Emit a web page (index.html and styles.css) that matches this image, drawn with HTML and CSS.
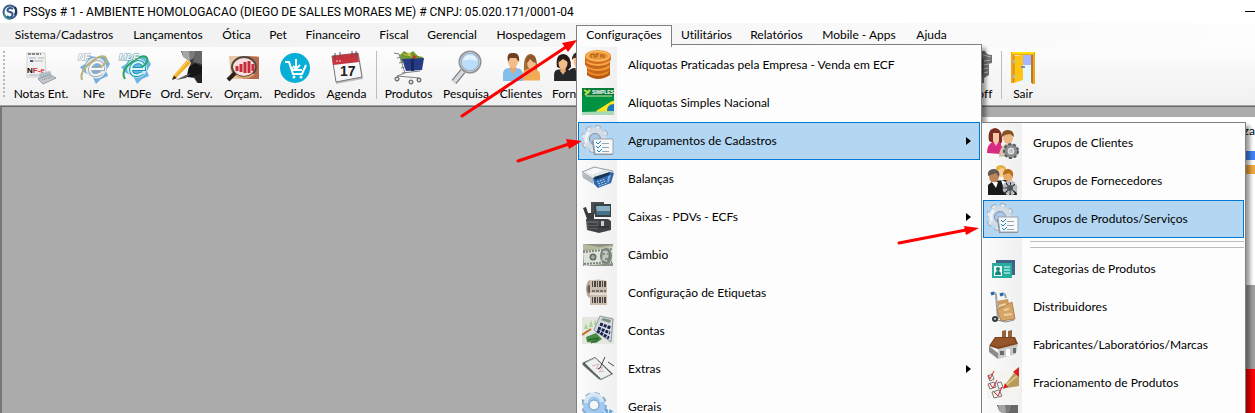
FILE: index.html
```
<!DOCTYPE html>
<html lang="pt-BR">
<head>
    <meta charset="UTF-8">
    <meta name="viewport" content="width=device-width, initial-scale=1.0">
    <title>PSSys</title>
    <link rel="stylesheet" href="styles.css">
</head>
<body>
    <!-- Símbolos usados mais de uma vez -->
    <svg class="symbols" aria-hidden="true">
        <symbol id="gear-list" viewBox="0 0 32 32">
            <circle cx="13" cy="14" r="11.5" fill="none" stroke="#9aa8b8" stroke-width="5" stroke-dasharray="5 4.03"/>
            <circle cx="13" cy="14" r="11.5" fill="none" stroke="#e4eaf0" stroke-width="3" stroke-dasharray="4 5.03" stroke-dashoffset="-0.5"/>
            <circle cx="13" cy="14" r="8.5" fill="none" stroke="#d3dce5" stroke-width="5"/>
            <path d="M5 18a9 9 0 0 1 2-11" fill="none" stroke="#eef3f7" stroke-width="3"/>
            <circle cx="13" cy="14" r="5.5" fill="#a9c9e8" stroke="#8093a8"/>
            <path d="M10 16h19l2 1v13H12z" fill="#7f8c99"/>
            <path d="M11 14h20v15H13z" fill="#f6f8fa" stroke="#98a3ae"/>
            <path d="M14 17l2 2 3-3M14 21l2 2 3-3M15 25l2 2 3-3" fill="none" stroke="#1687c4"/>
            <path d="M20 18.500h7M20 22.500h7M20 26.500h7" stroke="#9aa6b2"/>
        </symbol>
        <symbol id="pencil-hand" viewBox="0 0 32 32">
            <path d="M10 0h21v33h-4l-4-6-7-1 1-7 3-7-3-4-5-3z" fill="#3f3f3f"/>
            <path d="M11 0h13l-1 6-5 4-6-4z" fill="#a5a5a5"/>
            <path d="M18 0h7l-2 7-4 2z" fill="#7b7b7b"/>
            <path d="M25 0h6v13l-9-2z" fill="#666"/>
            <path d="M18 16l6-4 7 3v8l-8 3-7 0z" fill="#161616"/>
            <path d="M20 22l-5 5-10 2 10-5z" fill="#555"/>
            <path d="M24 26l7-4v10l-3 1z" fill="#222"/>
            <path d="M2 25L16 9l4 3L6 26l-5 3z" fill="#f2ae26"/>
            <path d="M4 24L17 10" stroke="#ffdc70"/>
            <path d="M1 29l2-4 3 2z" fill="#2c2015"/>
        </symbol>
        <symbol id="person" viewBox="0 0 20 28">
            <path d="M0 28v-7q0-6 6-6h7q6 0 7 6v7z" fill="currentColor"/>
            <path d="M7 13h6v4l-3 4-3-4z" fill="#e5a978"/>
            <ellipse cx="10" cy="8" rx="5" ry="7" fill="#f2bd8b"/>
        </symbol>
    </svg>

    <header class="titlebar">
        <svg class="app-logo" viewBox="0 0 16 16">
            <circle cx="8" cy="8" r="6.500" fill="#f5fafb" stroke="#3b5f8d" stroke-width="2"/>
            <path d="M2 10a6.500 6.500 0 0 0 6 5" fill="none" stroke="#3d9c9c" stroke-width="2"/>
            <path d="M11 5q-3-2-5 0t2 3 2 4-5 0" fill="none" stroke="#32558a" stroke-width="2"/>
            <path d="M13 3q2 4 0 8" fill="none" stroke="#20344f" stroke-width="2"/>
        </svg>
        <span class="title">PSSys # 1 - AMBIENTE HOMOLOGACAO (DIEGO DE SALLES MORAES ME) # CNPJ: 05.020.171/0001-04</span>
        <button class="minimize" aria-label="Minimizar"></button>
    </header>

    <!-- Menu principal -->
    <nav class="menubar">
        <button>Sistema/Cadastros</button>
        <button>Lançamentos</button>
        <button>Ótica</button>
        <button>Pet</button>
        <button>Financeiro</button>
        <button>Fiscal</button>
        <button>Gerencial</button>
        <button>Hospedagem</button>
        <div class="menu-open">
            <button class="active">Configurações</button>
            <div class="dropdown main-menu">
                <button class="item">
                    <svg viewBox="0 0 32 32">
                        <path d="M5 21v5q11 8 23 0v-5z" fill="#b85713"/>
                        <ellipse cx="16" cy="22" rx="11" ry="5" fill="#e88b29"/>
                        <path d="M5 16v5q11 8 23 0v-5z" fill="#c9651b"/>
                        <ellipse cx="16" cy="17" rx="12" ry="5" fill="#f09a38"/>
                        <path d="M3 11v5q12 8 25 0v-5z" fill="#c9651b"/>
                        <ellipse cx="16" cy="12" rx="12" ry="5" fill="#f5a545"/>
                        <path d="M3 7v4q12 8 26 0V7z" fill="#d06c1c"/>
                        <ellipse cx="16" cy="7" rx="13" ry="6" fill="#ee9a3a"/>
                        <ellipse cx="16" cy="7" rx="11" ry="4.500" fill="none" stroke="#ffc36e"/>
                        <path d="M9 9V5h3v4M14 9V5h3M14 7h2M19 9V5l3 4V5" fill="none" stroke="#a65819"/>
                    </svg>
                    <span>Alíquotas Praticadas pela Empresa - Venda em ECF</span>
                </button>
                <button class="item">
                    <svg viewBox="0 0 32 32">
                        <path d="M0 1h32v27H0z" fill="#009243"/>
                        <path d="M0 1h32v8H0z" fill="#087b3b"/>
                        <path d="M14 24L30 14h2v11H15z" fill="#f9e51b"/>
                        <path d="M25 24q0-7 7-7v8z" fill="#1979b8"/>
                        <path d="M0 25l32-1v4H0z" fill="#a7d9b7"/>
                        <path d="M2 3l5 3M8 3L3 8" stroke="#b7e14a" stroke-width="2"/>
                        <text x="10" y="7" class="simples-text">SIMPLES</text>
                        <path d="M4 9h26" stroke="#d9e6a0"/>
                    </svg>
                    <span>Alíquotas Simples Nacional</span>
                </button>
                <button class="item selected">
                    <svg><use href="#gear-list"/></svg>
                    <span>Agrupamentos de Cadastros</span>
                    <i class="arrow"></i>
                </button>
                <button class="item">
                    <svg viewBox="0 0 32 32">
                        <path d="M0 9L12 4l19 4-2 4-18 4z" fill="#e2e5e7" stroke="#9aa1a7"/>
                        <path d="M3 9l10-4 8 2-10 5z" fill="#f7f8f8"/>
                        <path d="M0 10l11 6v5L1 15z" fill="#b4b9bd"/>
                        <path d="M11 15l17-6 4 1-3 10-13 5-4-4z" fill="#2f67ad"/>
                        <path d="M12 14l16-5-1 3-14 5z" fill="#173553"/>
                        <path d="M15 19l8-3M16 21l8-3M17 23l8-3" stroke="#c2dcf3" stroke-dasharray="2 1"/>
                        <path d="M26 13l3-1-2 7-2 1z" fill="#7ea9d8"/>
                    </svg>
                    <span>Balanças</span>
                </button>
                <button class="item">
                    <svg viewBox="0 0 32 32">
                        <path d="M9 1h13v12H9z" fill="#4b4e50"/>
                        <path d="M12 3h17v13H13z" fill="#3a3f42"/>
                        <path d="M14 5h14v9H15z" fill="#86afc2"/>
                        <path d="M14 10h14v4H15z" fill="#44708a"/>
                        <path d="M1 7l3-1 2 6h6v6H5z" fill="#3a3d3f"/>
                        <path d="M4 18h22l3 2v9l-12 3-12-3z" fill="#404345"/>
                        <path d="M5 20h11v8H5z" fill="#5a5e61"/>
                        <path d="M19 20h3v5h-3z" fill="#c5cdd1"/>
                        <path d="M6 23h9M6 26h21" stroke="#222425"/>
                    </svg>
                    <span>Caixas - PDVs - ECFs</span>
                    <i class="arrow"></i>
                </button>
                <button class="item">
                    <svg viewBox="0 0 32 32">
                        <path d="M1 5h30v22H1z" fill="#8a9185"/>
                        <path d="M1 5l16 3 14-2v3L1 11z" fill="#b9ba9c"/>
                        <path d="M1 12l30-4v16L2 27z" fill="#dfe3da"/>
                        <path d="M1 13l29-3M2 25l28-2" stroke="#7b8579" stroke-width="2" stroke-dasharray="2 1"/>
                        <circle cx="11" cy="18" r="3.500" fill="#626b62"/>
                        <circle cx="11" cy="18" r="2" fill="#a3ac9f"/>
                        <ellipse cx="24" cy="17" rx="6" ry="8" fill="#7a8379"/>
                        <path d="M21 12q5-2 6 3l-2 8-5-2z" fill="#bec5bc"/>
                        <path d="M21 15h2M25 15h2M23 20h3" stroke="#515b52"/>
                    </svg>
                    <span>Câmbio</span>
                </button>
                <button class="item">
                    <svg viewBox="0 0 32 32">
                        <ellipse cx="8" cy="12" rx="4" ry="9" fill="#bba89a"/>
                        <ellipse cx="7" cy="12" rx="1.500" ry="4" fill="#695c54"/>
                        <path d="M8 4q8-3 17 0v24H8z" fill="#cbbdb0"/>
                        <path d="M10 7h14M10 23h14" stroke="#4d4744" stroke-width="6" stroke-dasharray="1 1 2 1"/>
                        <path d="M10 14h14" stroke="#77706a" stroke-width="2" stroke-dasharray="3 1"/>
                        <path d="M8 17h17" stroke="#fff8ef"/>
                    </svg>
                    <span>Configuração de Etiquetas</span>
                </button>
                <button class="item">
                    <svg viewBox="0 0 32 32">
                        <path d="M0 2h32v27H0z" fill="#e4e6e0"/>
                        <path d="M2 14l2-6 2 6zM7 12l2-7 2 7zM12 10l1-6 2 6z" fill="#a6d58f"/>
                        <path d="M0 20l9-6" stroke="#bf7024" stroke-width="2"/>
                        <path d="M4 22l10-4 6 6-6 4-9-1z" fill="#458c43"/>
                        <path d="M6 25l10-2M9 28l8-4" stroke="#28522c"/>
                        <path d="M18 1l13 3-2 23-17-12z" fill="#d7dbe1" stroke="#8f969e"/>
                        <path d="M21 3l8 2-1 3-9-3z" fill="#779080"/>
                        <path d="M18 9l11 4M16 13l12 5M15 16l12 7" stroke="#18224f" stroke-width="3" stroke-dasharray="3 1"/>
                    </svg>
                    <span>Contas</span>
                </button>
                <button class="item">
                    <svg viewBox="0 0 32 32">
                        <path d="M0 10L13 4l18 17-12 6z" fill="#4b5455"/>
                        <path d="M3 10l10-5 16 16-10 5z" fill="#eef1f0" stroke="#b6bdbc"/>
                        <path d="M1 11l17 15" stroke="#60696a" stroke-width="2"/>
                        <path d="M10 13l7-2-3 5 7-2-4 5 5-1" fill="none" stroke="#dfb5b5"/>
                        <path d="M23 4l-5 11-2 1M26 9l6 4" fill="none" stroke="#3e4849"/>
                    </svg>
                    <span>Extras</span>
                    <i class="arrow"></i>
                </button>
                <button class="item">
                    <svg viewBox="0 0 32 32">
                        <circle cx="12" cy="14" r="11" fill="none" stroke="#86a9cb" stroke-width="4" stroke-dasharray="5 3.640"/>
                        <circle cx="12" cy="14" r="8" fill="none" stroke="#a1c9ef" stroke-width="6"/>
                        <path d="M4 12a8 8 0 0 1 16-1" fill="none" stroke="#d6e5ef" stroke-width="4"/>
                        <circle cx="12" cy="14" r="5" fill="none" stroke="#6296c4"/>
                        <circle cx="26" cy="25" r="5" fill="none" stroke="#6ba9db" stroke-width="4" stroke-dasharray="3 1"/>
                    </svg>
                    <span>Gerais</span>
                </button>
            </div>

            <!-- Submenu de Agrupamentos de Cadastros -->
            <div class="dropdown sub-menu">
                <button class="item">
                    <svg viewBox="0 0 32 32">
                        <path d="M2 14Q0 2 8 1q8 1 7 14l-3 4z" fill="#7c2e20"/>
                        <path d="M0 26q0-9 6-11h7l4 10-4 2z" fill="#d92b82"/>
                        <path d="M6 14l3 5 3-5V6H6z" fill="#f5c7a8"/>
                        <path d="M12 30q0-9 6-13h7q5 1 6 11z" fill="#d5c2a8"/>
                        <ellipse cx="21" cy="11" rx="5" ry="6" fill="#efb784"/>
                        <path d="M15 10q-1-7 6-7 6 0 6 7l-4-3-5 1z" fill="#865324"/>
                        <circle cx="24" cy="24" r="7" fill="#8b8e91" stroke="#54585b" stroke-width="2" stroke-dasharray="3 2"/>
                        <circle cx="24" cy="24" r="3" fill="#bfc2c4" stroke="#eee"/>
                    </svg>
                    <span>Grupos de Clientes</span>
                </button>
                <button class="item">
                    <svg viewBox="0 0 32 32">
                        <ellipse cx="14" cy="6" rx="5" ry="6" fill="#f6cf9a"/>
                        <path d="M9 6q-1-6 5-6 6 1 5 6l-4-3z" fill="#e5b343"/>
                        <ellipse cx="21" cy="11" rx="5" ry="6" fill="#e8aa68"/>
                        <path d="M16 10q0-7 6-6 5 1 4 8l-4-4z" fill="#b66d18"/>
                        <path d="M1 30V20l5-4 12-1 10 4 2 11z" fill="#17191b"/>
                        <ellipse cx="7" cy="11" rx="5" ry="7" fill="#bd8558"/>
                        <path d="M1 11q-1-7 6-7 7 1 5 8l-3-4z" fill="#625b53"/>
                        <path d="M5 17l4 6 2-6zM14 15l3 9 2-7z" fill="#fff"/>
                        <circle cx="23" cy="23" r="5" fill="none" stroke="#b7bcc0" stroke-width="5" stroke-dasharray="3 1"/>
                        <circle cx="23" cy="23" r="3" fill="#505559"/>
                    </svg>
                    <span>Grupos de Fornecedores</span>
                </button>
                <button class="item selected">
                    <svg><use href="#gear-list"/></svg>
                    <span>Grupos de Produtos/Serviços</span>
                </button>
                <div class="separator"></div>
                <button class="item">
                    <svg viewBox="0 0 32 32">
                        <path d="M9 7h19v15H9z" fill="#41628b"/>
                        <path d="M5 10h20v15H5z" fill="#27ad9d"/>
                        <path d="M7 13h8v10H7z" fill="#f4fbfa"/>
                        <circle cx="11" cy="16" r="2" fill="#168676"/>
                        <path d="M8 22q0-4 3-4t3 4z" fill="#168676"/>
                        <path d="M17 14h6M17 17h6M17 20h6" stroke="#eafffb"/>
                    </svg>
                    <span>Categorias de Produtos</span>
                </button>
                <button class="item">
                    <svg viewBox="0 0 32 32">
                        <path d="M4 3q4-3 5 1l2 24M13 4q5-4 6 3" fill="none" stroke="#9ba3aa" stroke-width="2"/>
                        <path d="M4 3l3-1M13 4l3-1" stroke="#2367b1" stroke-width="3"/>
                        <path d="M10 10l11-2 2 9-11 2z" fill="#c89a60"/>
                        <path d="M10 19l15-8 3 17-14 2z" fill="#d5a568" stroke="#b08550"/>
                        <path d="M12 15l7-2M17 19l5-1M17 24l8-1" stroke="#f1d0a0" stroke-width="2"/>
                        <path d="M6 28l13 3 8-2" fill="none" stroke="#858c91"/>
                        <circle cx="8" cy="28" r="3" fill="#383b3e"/>
                        <circle cx="8" cy="28" r="1" fill="#ddd"/>
                    </svg>
                    <span>Distribuidores</span>
                </button>
                <button class="item">
                    <svg viewBox="0 0 32 32">
                        <path d="M15 2l4-1v11h-4zM21 2l4-1v13h-4z" fill="#986238"/>
                        <path d="M2 17l9 7v6L2 23z" fill="#8b8b89"/>
                        <path d="M11 19l20-4-2 10-18 5z" fill="#cacac7"/>
                        <path d="M2 17L8 8h20l3 7-20 5z" fill="#7e431c"/>
                        <path d="M4 16l5-7h17l3 5-18 4z" fill="#97552a"/>
                        <path d="M13 22h4v4h-4zM26 19h3v5h-3z" fill="#656b6f"/>
                        <path d="M19 20h4v7h-4z" fill="#fff"/>
                    </svg>
                    <span>Fabricantes/Laboratórios/Marcas</span>
                </button>
                <button class="item">
                    <svg viewBox="0 0 32 32">
                        <path d="M0 3h32v28H0z" fill="#f4f3f0"/>
                        <path d="M1 9l4-2 2 5-4 2zM1 17l6-2 2 5-6 2zM5 25l7-2 3 6-8 2zM10 16l4-1 2 5-4 2z" fill="none" stroke="#757575"/>
                        <path d="M1 8l2 4L7 4M3 17l3 4 4-8M7 25l4 4 4-9" fill="none" stroke="#d2262a"/>
                        <path d="M17 19L27 6l5 3v10l-13 2z" fill="#b89a5a"/>
                        <path d="M18 19L30 9" stroke="#dcc48a" stroke-width="2"/>
                        <path d="M26 5l6-5v10z" fill="#d72324"/>
                        <path d="M18 16l3 4-5 2z" fill="#d81e22"/>
                    </svg>
                    <span>Fracionamento de Produtos</span>
                </button>
                <button class="item" aria-label="Funcionários">
                    <svg viewBox="0 0 32 32"><use href="#pencil-hand"/></svg>
                </button>
            </div>
        </div>
        <button>Utilitários</button>
        <button>Relatórios</button>
        <button>Mobile - Apps</button>
        <button>Ajuda</button>
    </nav>

    <!-- Barra de ferramentas -->
    <div class="toolbar">
        <button>
            <svg viewBox="0 0 32 32">
                <path d="M2 2h18l1 24H2z" fill="#f2f2f1" stroke="#d2d2d2"/>
                <path d="M3 3h13" stroke="#292929" stroke-dasharray="3 1"/>
                <path d="M4 7h7M13 7h6M5 10h13M4 24h12" stroke="#aab1b8"/>
                <path d="M5 10h3" stroke="#435d8a" stroke-width="2"/>
                <text x="2" y="22" class="nf-text">N<tspan class="nf-red">F-e</tspan></text>
                <path d="M14 23l11-3 2 5-13 4z" fill="#a9bcc8" stroke="#cbd3d8"/>
                <path d="M13 28l12-4 6 3-13 6z" fill="#c7cbd0" stroke="#959ba3"/>
                <path d="M17 29l10-3" stroke="#727b86" stroke-dasharray="1 1"/>
            </svg>
            Notas Ent.
        </button>
        <button>
            <svg viewBox="0 0 32 32">
                <path d="M12 5l7 1 8-1 5 8-4 7 2 5-7 3-5 5-4-8-7-3-5-6 5-3z" fill="#79addc"/>
                <circle cx="18" cy="17" r="8" fill="none" stroke="#e8eef3" stroke-width="5"/>
                <path d="M12 18h13q0-7-6-7-6 1-7 7 0 7 7 6l5-2" fill="none" stroke="#a3acb1" stroke-width="4"/>
                <path d="M12 18h13q0-7-6-7-6 1-7 7 0 7 7 6l5-2" fill="none" stroke="#f5f7f8" stroke-width="2"/>
                <path d="M4 29Q1 21 13 11 25 2 28 7q2 4-5 9" fill="none" stroke="#b8b276" stroke-width="2"/>
                <text x="0" y="9" class="nfe-text">NF</text>
            </svg>
            NFe
        </button>
        <button>
            <svg viewBox="0 0 32 32">
                <path d="M12 5l7 1 8-1 5 8-4 7 2 5-7 3-5 5-4-8-7-3-5-6 5-3z" fill="#6bb5e6"/>
                <circle cx="18" cy="17" r="8" fill="none" stroke="#d5e9ee" stroke-width="4"/>
                <path d="M12 18h13q0-7-6-7-6 1-7 7 0 7 7 6l5-2" fill="none" stroke="#1497b8" stroke-width="4"/>
                <path d="M12 18h13q0-7-6-7-6 1-7 7 0 7 7 6l5-2" fill="none" stroke="#ddf4f7" stroke-width="2"/>
                <path d="M6 28Q1 20 13 11 25 2 28 7q2 4-5 9" fill="none" stroke="#28a760" stroke-width="2"/>
                <text x="0" y="9" class="nfe-text mdf">MDF</text>
            </svg>
            MDFe
        </button>
        <button><svg><use href="#pencil-hand"/></svg>Ord. Serv.</button>
        <button>
            <svg viewBox="0 0 32 32">
                <path d="M2 5h29l1 23H4z" fill="#e5c9a8"/>
                <path d="M20 5l12 1v22H16z" fill="#b76b4d"/>
                <ellipse cx="17" cy="16" rx="12" ry="10" fill="#f9dfdc" stroke="#504740" stroke-width="2"/>
                <path d="M10 15v5M14 13v8M18 11v11M22 10v12M26 13v7" stroke="#c72b39" stroke-width="3"/>
                <path d="M9 24q9 6 18-1" fill="none" stroke="#daa36b" stroke-width="2"/>
                <path d="M1 29l7-7" stroke="#2b211a" stroke-width="4"/>
            </svg>
            Orçam.
        </button>
        <button>
            <svg viewBox="0 0 32 32">
                <circle cx="16" cy="17" r="15" fill="#07aed5"/>
                <path d="M6 11h4l4 12h9l4-9" fill="none" stroke="#fff" stroke-width="2"/>
                <path d="M17 8v10M14 15l3 3 4-4M12 16l2 3h9" fill="none" stroke="#fff" stroke-width="2"/>
                <circle cx="15" cy="26" r="1.500" fill="#fff"/><circle cx="22" cy="26" r="1.500" fill="#fff"/>
            </svg>
            Pedidos
        </button>
        <button>
            <svg viewBox="0 0 32 32">
                <path d="M3 7l25-3 4 24-27 5z" fill="#bfc0c2"/>
                <path d="M1 5l26-3 4 24-26 5z" fill="#f7f7f7" stroke="#777"/>
                <path d="M1 5l26-3 1 9-26 3z" fill="#c6353d"/>
                <path d="M4 2v6M9 1v6M21 0v6M25 0v6" stroke="#555"/>
                <path d="M5 10h6" stroke="#ffd4d4" stroke-dasharray="2 1"/>
                <text x="9" y="25" class="day">17</text>
            </svg>
            Agenda
        </button>
        <i class="divider"></i>
        <button>
            <svg viewBox="0 0 32 32">
                <path d="M7 4l4-4 5 3 4-3 5 5 5 1-1 6H8z" fill="#72992d"/>
                <path d="M9 2l4 3 3-4 3 5z" fill="#dcc44b"/>
                <path d="M20 4l4 2-5 3z" fill="#bd3c25"/>
                <path d="M9 8l22-1-2 12-16 1z" fill="#263b84"/>
                <path d="M18 8h3v12h-3z" fill="#18275f"/>
                <path d="M1 2l5 1 6 19-8 3 22 2M4 7l5-1M6 12l5-1M8 17l4-1M9 22l18-2" fill="none" stroke="#7c8185"/>
                <circle cx="4" cy="28" r="2" fill="#ddd" stroke="#44484a"/><circle cx="18" cy="31" r="2" fill="#ddd" stroke="#44484a"/><circle cx="26" cy="29" r="2" fill="#ddd" stroke="#44484a"/>
            </svg>
            Produtos
        </button>
        <button>
            <svg viewBox="0 0 32 32">
                <path d="M4 31l9-11" stroke="#6e7379" stroke-width="6"/>
                <path d="M4 31l9-11" stroke="#d5d7da" stroke-width="4"/>
                <circle cx="20" cy="11" r="10" fill="#b9ddfb" stroke="#8d9298" stroke-width="3"/>
                <circle cx="20" cy="11" r="9.500" fill="none" stroke="#d0d3d5"/>
                <path d="M13 10q7-3 14 0Q26 4 20 4t-7 6z" fill="#e5f3ff"/>
            </svg>
            Pesquisa
        </button>
        <button>
            <svg class="people" viewBox="0 0 36 32">
                <path d="M21 20Q20 3 28 3q7 1 6 17l-4 4z" fill="#a46c35"/>
                <use href="#person" x="20" y="5" width="17" height="25" class="orange"/>
                <path d="M23 12q0-8 5-8t5 8q-4-1-6-4-1 3-4 4z" fill="#8e572b"/>
                <use href="#person" x="0" y="2" width="20" height="28" class="blue"/>
                <path d="M5 11Q3 1 10 2q7-1 6 9l-3-4H7z" fill="#6e4021"/>
            </svg>
            Clientes
        </button>
        <button>
            <svg class="people" viewBox="0 0 36 32">
                <path d="M3 16Q1 3 10 3q7 1 7 13l-4 4z" fill="#281c19"/>
                <use href="#person" x="0" y="5" width="18" height="25" class="dark"/>
                <path d="M5 11q0-8 5-7 5 1 4 7l-5-3z" fill="#241a18"/>
                <use href="#person" x="13" y="2" width="23" height="28" class="dark"/>
                <path d="M18 9q0-8 7-8t6 9l-4-4-7 1z" fill="#3b2822"/>
                <path d="M22 18l2 6 3-6z" fill="#fff"/>
            </svg>
            Fornec.
        </button>
        <button class="logoff">
            <svg viewBox="0 0 32 32">
                <path d="M18 0h7q1 4 7 4v8q-3 0-3 2v10l-5 3v5h-8z" fill="#717171"/>
                <path d="M23 4l8 2M24 10l6-1M23 14l6-1M23 18l5-1M23 22l5-1" stroke="#bdbdbd"/>
                <path d="M22 8v16" stroke="#454545" stroke-width="3"/>
            </svg>
            Logoff
        </button>
        <i class="divider"></i>
        <button>
            <svg viewBox="0 0 32 32">
                <path d="M4 1h24v32h-3V4H7v28H4z" fill="#efa619"/>
                <path d="M5 2h22" stroke="#ffe000" stroke-width="2"/>
                <path d="M8 4h17v27H8z" fill="#e6f6ff"/>
                <path d="M15 4h10v10H15z" fill="#a5b7ff"/>
                <path d="M25 4v28" stroke="#b97830" stroke-width="2"/>
                <path d="M7 5l9-1v25l-9 3z" fill="#ffc414"/>
                <path d="M7 4v27" stroke="#c98425"/>
                <path d="M14 16h4" stroke="#7f8fb1" stroke-width="2"/>
                <path d="M7 9v3M7 24v3" stroke="#94c2db" stroke-width="2"/>
            </svg>
            Sair
        </button>
    </div>

    <main class="desktop">
        <section class="panel">
            <div class="chart">
                <span>za</span>
                <div class="bar blue-bar"></div>
                <div class="bar orange-bar"></div>
            </div>
            <div class="panel-gap"></div>
            <div class="alert"></div>
        </section>
    </main>

    <!-- Setas de indicação -->
    <svg class="pointers" aria-hidden="true">
        <g stroke="#f00" stroke-width="3" stroke-linecap="round">
            <path d="M462 116L566 47"/>
            <path d="M518 161L569 144"/>
            <path d="M899 243L966 230"/>
        </g>
        <g fill="#f00">
            <path d="M577 40l-15 3 6 9z"/>
            <path d="M582 141l-16-2 3 10z"/>
            <path d="M979 228l-15-2 2 9z"/>
        </g>
    </svg>
</body>
</html>
```
FILE: styles.css
```
* {
    box-sizing: border-box;
}

body {
    margin: 0;
    height: 100vh;
    display: flex;
    flex-direction: column;
    overflow: hidden;
    font-family: Lato, "Open Sans", sans-serif;
    font-size: 12px;
    line-height: 16px;
    font-variant-ligatures: none;
    color: #000;
    background: #ababab;
}

button {
    border: none;
    padding: 0;
    background: none;
    font: inherit;
    font-variant-ligatures: none;
    color: inherit;
    white-space: nowrap;
}

.symbols {
    position: absolute;
    width: 0;
    height: 0;
}

.titlebar {
    display: flex;
    flex: none;
    align-items: center;
    height: 23px;
    padding-left: 2px;
    background: #fff;
}

.app-logo {
    width: 16px;
    height: 16px;
    margin-right: 5px;
}

.title {
    font-family: Roboto, "Open Sans", sans-serif;
    white-space: nowrap;
}

.minimize {
    width: 10px;
    height: 1px;
    margin-left: auto;
    background: #000;
}

/* menu */
.menubar {
    display: grid;
    flex: none;
    grid-template-columns: 118px 90px 47px 36px 74px 48px 68px 90px 96px 69px 71px 94px 51px;
    height: 24px;
    padding-left: 5px;
    background: linear-gradient(to right, #f0f0f0, #fdfdfd);
}

.menu-open {
    position: relative;
    display: grid;
}

.active {
    position: relative;
    z-index: 3;
    margin-top: 2px;
    padding-bottom: 3px;
    border: 1px solid #808080;
    border-bottom: none;
    background: #fcfcfc;
}

.dropdown {
    position: absolute;
    border: 1px solid #808080;
    padding: 1px;
    background: linear-gradient(to right, #fbfbfb, #f0f0f0 40px, #fdfdfd 40px);
    box-shadow: 4px 4px 4px rgba(0, 0, 0, 0.4);
}

.main-menu {
    z-index: 2;
    top: 21px;
    left: 0;
    width: 406px;
}

.sub-menu {
    z-index: 4;
    top: 99px;
    left: 405px;
    width: 265px;
}

.item {
    display: flex;
    align-items: center;
    gap: 14px;
    width: 100%;
    height: 38px;
    padding-left: 3px;
    border: 1px solid transparent;
    text-align: left;
}

.item svg {
    flex: none;
    width: 32px;
    height: 32px;
}

.selected {
    border-color: #0078d7;
    background: #b3d7f3;
}

.arrow {
    margin-left: auto;
    margin-right: 8px;
    border: 4px solid transparent;
    border-left: 5px solid #000;
    border-right: none;
}

.separator {
    height: 7px;
    margin: 3px 0 2px 47px;
    border-top: 1px solid #bdbdbd;
    border-bottom: 1px solid #bdbdbd;
}

/* barra de ferramentas */
.toolbar {
    position: relative;
    display: grid;
    flex: none;
    grid-template-columns: 64px 42px 40px 63px 50px 53px 51px 8px 57px 58px 52px 49px 358px 43px 9px 34px;
    height: 59px;
    padding: 4px 0 0 9px;
    background: linear-gradient(#fdfdfd, #f0f0f0);
    border-bottom: 1px solid #a0a0a0;
}

.toolbar::before {
    content: "";
    position: absolute;
    top: 4px;
    left: 3px;
    height: 46px;
    border-left: 2px dotted #b8b8b8;
}

.toolbar button {
    display: flex;
    flex-direction: column;
    align-items: center;
    gap: 3px;
    height: 51px;
}

.toolbar svg {
    width: 32px;
    height: 32px;
    overflow: visible;
}

.toolbar .people {
    width: 36px;
}

.divider {
    justify-self: center;
    width: 1px;
    height: 48px;
    background: #bdbdbd;
}

.logoff {
    grid-column: 14;
}

/* textos e cores dos ícones */
.nf-text {
    font: bold 8px "Liberation Sans", sans-serif;
}

.nf-red {
    fill: #e02828;
}

.nfe-text {
    font: italic bold 9px "Liberation Sans", sans-serif;
    fill: #fff;
    stroke: #9aa9b5;
    stroke-width: 1px;
    paint-order: stroke;
}

.mdf {
    stroke: #5c9cae;
}

.day {
    font: bold 14px "Liberation Sans", sans-serif;
    fill: #222;
}

.simples-text {
    font: bold 5px "Liberation Sans", sans-serif;
    fill: #fff;
}

.blue {
    color: #83bde9;
}

.orange {
    color: #f3aa54;
}

.dark {
    color: #252728;
}

/* área de trabalho */
.desktop {
    display: flex;
    flex: 1;
    justify-content: flex-end;
    min-height: 0;
    padding-top: 10px;
    border-top: 1px solid #696969;
    border-left: 2px solid #777;
}

.panel {
    display: flex;
    flex-direction: column;
    width: 275px;
}

.chart {
    display: flex;
    flex: none;
    flex-direction: column;
    height: 168px;
    padding-top: 6px;
    background: #fff;
    text-align: right;
}

.bar {
    height: 9px;
}

.blue-bar {
    margin-top: 12px;
    background: #4285f4;
}

.orange-bar {
    margin-top: 5px;
    background: #f4a93f;
}

.panel-gap {
    flex: none;
    height: 84px;
    background: #a0a0a0;
}

.alert {
    flex: 1;
    background: #f00;
}

.pointers {
    position: absolute;
    z-index: 5;
    top: 0;
    left: 0;
    width: 100%;
    height: 100%;
    pointer-events: none;
}
```
